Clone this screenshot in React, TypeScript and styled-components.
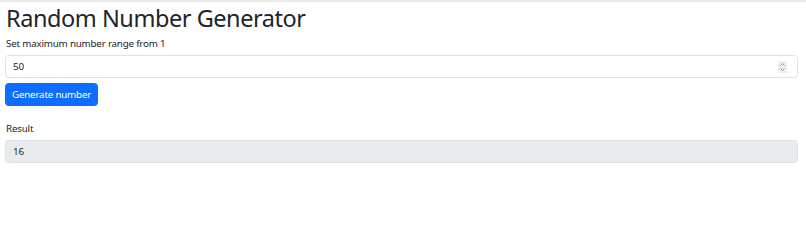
import React from "react";
import styled, { createGlobalStyle } from "styled-components";

const Global = createGlobalStyle`
  html, body { margin: 0; padding: 0; background: #fff; }
  body {
    font-family: "Noto Sans", "Open Sans", sans-serif;
    color: #212529;
    border-top: 2px solid #ebebeb;
  }
`;

const Page = styled.main`
  display: flex;
  flex-direction: column;
  padding: 0 8px 0 5px;
`;

const Title = styled.h1`
  margin: 2px 0 0 1px;
  font-weight: 400;
  font-size: 23.5px;
  letter-spacing: -0.45px;
  line-height: 29px;
`;

const Label = styled.label<{ $top?: number }>`
  display: block;
  margin: ${(p) => p.$top ?? 4}px 0 4px 1px;
  font-size: 9.8px;
  letter-spacing: -0.2px;
  line-height: 14px;
`;

const Field = styled.div<{ $disabled?: boolean }>`
  display: flex;
  align-items: center;
  justify-content: space-between;
  height: 23px;
  box-sizing: border-box;
  padding: 0 10px 0 7px;
  border: 1px solid #dee2e6;
  border-radius: 3.5px;
  background: ${(p) => (p.$disabled ? "#e9ecef" : "#fff")};
  font-size: 9.8px;
`;

const Spinner = styled.div`
  display: flex;
  flex-direction: column;
  align-items: center;
  justify-content: center;
  width: 9px;
  height: 12px;
  background: #efefef;
  border-radius: 1px;
`;

const Button = styled.button`
  align-self: flex-start;
  margin-top: 5px;
  height: 23px;
  padding: 0 6px;
  border: 1px solid #0d6efd;
  border-radius: 3.5px;
  background: #0d6efd;
  color: #fff;
  font-family: inherit;
  font-size: 9.8px;
  letter-spacing: -0.2px;
`;

export default function App() {
  return (
    <>
      <Global />
      <Page>
        <Title>Random Number Generator</Title>
        <Label>Set maximum number range from 1</Label>
        <Field>
          <span>50</span>
          <Spinner>
            <svg width="7" height="10" viewBox="0 0 7 10">
              <path d="M1.5 3.5 L3.5 1.5 L5.5 3.5" fill="none" stroke="#8a8a8a" strokeWidth="0.9" />
              <path d="M1.5 6.5 L3.5 8.5 L5.5 6.5" fill="none" stroke="#8a8a8a" strokeWidth="0.9" />
            </svg>
          </Spinner>
        </Field>
        <Button>Generate number</Button>
        <Label $top={16}>Result</Label>
        <Field $disabled>
          <span>16</span>
        </Field>
      </Page>
    </>
  );
}
